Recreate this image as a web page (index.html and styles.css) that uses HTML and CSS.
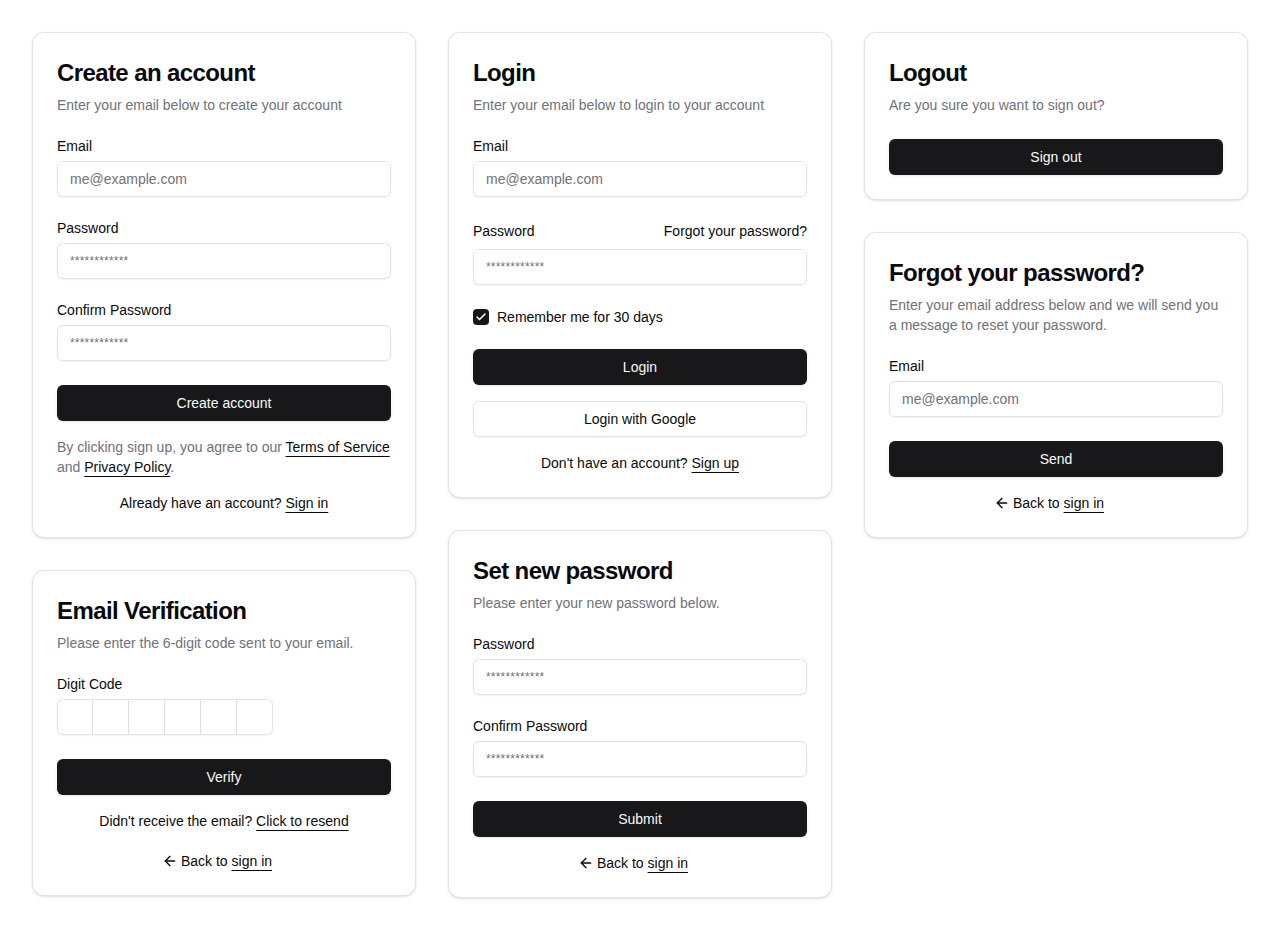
FILE: index.html
```html
<!DOCTYPE html>
<html lang="en">
<head>
<meta charset="utf-8">
<title>Auth cards</title>
<link rel="stylesheet" href="styles.css">
</head>
<body>
<main class="grid">
  <div class="col">
    <section class="card">
      <header class="head">
        <h2 class="title">Create an account</h2>
        <p class="sub">Enter your email below to create your account</p>
      </header>
      <div class="field">
        <label class="label">Email</label>
        <div class="input ph">me@example.com</div>
      </div>
      <div class="field">
        <label class="label">Password</label>
        <div class="input ph pw">************</div>
      </div>
      <div class="field">
        <label class="label">Confirm Password</label>
        <div class="input ph pw">************</div>
      </div>
      <button class="btn primary mt24">Create account</button>
      <p class="note mt16">By clicking sign up, you agree to our <a class="link">Terms of Service</a> and <a class="link">Privacy Policy</a>.</p>
      <p class="center mt16">Already have an account? <a class="link">Sign in</a></p>
    </section>
    <section class="card">
      <header class="head">
        <h2 class="title">Email Verification</h2>
        <p class="sub">Please enter the 6-digit code sent to your email.</p>
      </header>
      <div class="field">
        <label class="label">Digit Code</label>
        <div class="otp"><span></span><span></span><span></span><span></span><span></span><span></span></div>
      </div>
      <button class="btn primary mt24">Verify</button>
      <p class="center mt16">Didn't receive the email? <a class="link">Click to resend</a></p>
      <p class="center back mt20"><svg class="arrow" viewBox="0 0 24 24" width="16" height="16"><path d="m12 19-7-7 7-7"/><path d="M19 12H5"/></svg>Back to <a class="link">sign in</a></p>
    </section>
  </div>
  <div class="col">
    <section class="card">
      <header class="head">
        <h2 class="title">Login</h2>
        <p class="sub">Enter your email below to login to your account</p>
      </header>
      <div class="field">
        <label class="label">Email</label>
        <div class="input ph">me@example.com</div>
      </div>
      <div class="field">
        <div class="row">
          <label class="label">Password</label>
          <a class="plain">Forgot your password?</a>
        </div>
        <div class="input ph pw">************</div>
      </div>
      <div class="check mt24">
        <span class="box"><svg viewBox="0 0 24 24" width="12" height="12"><path d="M20 6 9 17l-5-5"/></svg></span>
        <span>Remember me for 30 days</span>
      </div>
      <button class="btn primary mt24">Login</button>
      <button class="btn outline mt16">Login with Google</button>
      <p class="center mt16">Don't have an account? <a class="link">Sign up</a></p>
    </section>
    <section class="card">
      <header class="head">
        <h2 class="title">Set new password</h2>
        <p class="sub">Please enter your new password below.</p>
      </header>
      <div class="field">
        <label class="label">Password</label>
        <div class="input ph pw">************</div>
      </div>
      <div class="field">
        <label class="label">Confirm Password</label>
        <div class="input ph pw">************</div>
      </div>
      <button class="btn primary mt24">Submit</button>
      <p class="center back mt16"><svg class="arrow" viewBox="0 0 24 24" width="16" height="16"><path d="m12 19-7-7 7-7"/><path d="M19 12H5"/></svg>Back to <a class="link">sign in</a></p>
    </section>
  </div>
  <div class="col">
    <section class="card">
      <header class="head">
        <h2 class="title">Logout</h2>
        <p class="sub">Are you sure you want to sign out?</p>
      </header>
      <button class="btn primary mt24">Sign out</button>
    </section>
    <section class="card">
      <header class="head">
        <h2 class="title">Forgot your password?</h2>
        <p class="sub">Enter your email address below and we will send you a message to reset your password.</p>
      </header>
      <div class="field">
        <label class="label">Email</label>
        <div class="input ph">me@example.com</div>
      </div>
      <button class="btn primary mt24">Send</button>
      <p class="center back mt16"><svg class="arrow" viewBox="0 0 24 24" width="16" height="16"><path d="m12 19-7-7 7-7"/><path d="M19 12H5"/></svg>Back to <a class="link">sign in</a></p>
    </section>
  </div>
</main>
</body>
</html>
```
FILE: styles.css
```css
* { box-sizing: border-box; }
html, body { margin: 0; background: #fff; }
body {
  font-family: "Liberation Sans", Arial, sans-serif;
  font-size: 14px;
  line-height: 20px;
  color: #09090b;
}
.grid {
  display: grid;
  grid-template-columns: repeat(3, 384px);
  gap: 32px;
  padding: 32px;
  align-items: start;
}
.col {
  display: flex;
  flex-direction: column;
  gap: 32px;
}
.card {
  border: 1px solid #e4e4e7;
  border-radius: 12px;
  background: #fff;
  padding: 24px;
  box-shadow: 0 1px 3px rgba(0,0,0,0.1), 0 1px 2px -1px rgba(0,0,0,0.1);
  display: flex;
  flex-direction: column;
}
.head { display: flex; flex-direction: column; gap: 6px; }
.title {
  margin: 0;
  font-size: 24px;
  line-height: 32px;
  font-weight: 700;
  letter-spacing: -0.6px;
}
.sub { margin: 0; color: #71717a; }
.field {
  display: flex;
  flex-direction: column;
  gap: 8px;
  margin-top: 24px;
}
.label { display: block; line-height: 14px; }
.row {
  display: flex;
  justify-content: space-between;
  align-items: center;
  height: 20px;
}
.plain { color: #09090b; }
.input {
  height: 36px;
  border: 1px solid #e4e4e7;
  border-radius: 6px;
  padding: 0 12px;
  display: flex;
  align-items: center;
  box-shadow: 0 1px 2px rgba(0,0,0,0.05);
}
.ph { color: #71717a; }
.pw { font-size: 12px; letter-spacing: 0.2px; }
.otp { display: flex; }
.otp span {
  width: 36px;
  height: 36px;
  border-top: 1px solid #e4e4e7;
  border-bottom: 1px solid #e4e4e7;
  border-right: 1px solid #e4e4e7;
  box-shadow: 0 1px 2px rgba(0,0,0,0.05);
}
.otp span:first-child { border-left: 1px solid #e4e4e7; border-radius: 6px 0 0 6px; }
.otp span:last-child { border-radius: 0 6px 6px 0; }
.btn {
  height: 36px;
  border-radius: 6px;
  font-family: inherit;
  font-size: 14px;
  line-height: 20px;
  width: 100%;
  cursor: pointer;
}
.primary {
  background: #18181b;
  color: #fafafa;
  border: none;
  box-shadow: 0 1px 3px rgba(0,0,0,0.1);
}
.outline {
  background: #fff;
  color: #09090b;
  border: 1px solid #e4e4e7;
  box-shadow: 0 1px 2px rgba(0,0,0,0.05);
}
.mt24 { margin-top: 24px; }
.mt20 { margin-top: 20px; }
.mt16 { margin-top: 16px; }
.note { margin-bottom: 0; color: #71717a; }
.center { margin-bottom: 0; text-align: center; }
.back { padding-right: 14px; }
.link {
  color: #09090b;
  text-decoration: underline;
  text-underline-offset: 4px;
  text-decoration-thickness: 1px;
}
.arrow {
  display: inline-block;
  vertical-align: -3px;
  fill: none;
  stroke: #09090b;
  stroke-width: 2;
  stroke-linecap: round;
  stroke-linejoin: round;
  margin-right: 3px;
}
.check {
  display: flex;
  align-items: center;
  gap: 8px;
  height: 16px;
}
.box {
  width: 16px;
  height: 16px;
  border-radius: 4px;
  background: #18181b;
  display: flex;
  align-items: center;
  justify-content: center;
}
.box svg {
  fill: none;
  stroke: #fff;
  stroke-width: 3;
  stroke-linecap: round;
  stroke-linejoin: round;
}
```
